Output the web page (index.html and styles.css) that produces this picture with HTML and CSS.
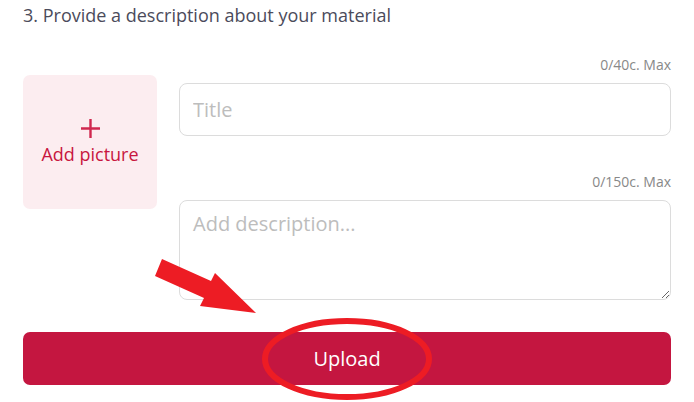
FILE: index.html
```html
<!DOCTYPE html>
<html lang="en">
<head>
    <meta charset="UTF-8">
    <meta name="viewport" content="width=device-width, initial-scale=1.0">
    <title>Upload Material</title>
    <link rel="stylesheet" href="styles.css">
</head>
<body>
    <main class="step">
        <h2 class="step-title">3. Provide a description about your material</h2>

        <div class="material-row">
            <button class="picture-box" type="button">
                <svg class="picture-plus" width="19" height="19" viewBox="0 0 19 19">
                    <path d="M9.5 0V19M0 9.5H19" stroke="#d0284f" stroke-width="2.4" fill="none"/>
                </svg>
                <span class="picture-label">Add picture</span>
            </button>

            <div class="fields">
                <p class="counter">0/40c. Max</p>
                <input class="field field-title" type="text" placeholder="Title">
                <p class="counter counter-desc">0/150c. Max</p>
                <textarea class="field field-desc" placeholder="Add description..."></textarea>
            </div>
        </div>

        <button class="upload-btn" type="button">Upload</button>
    </main>

    <!-- annotation drawn over the page -->
    <svg class="annotation" width="694" height="402" viewBox="0 0 694 402">
        <polygon points="162,259 211,281 215,273 256,313 200,306 204,298 155,276" fill="#ed1c24"/>
        <ellipse cx="347" cy="359" rx="82" ry="38" fill="none" stroke="#ed1c24" stroke-width="6"/>
    </svg>
</body>
</html>
```

FILE: styles.css
```css
* {
    box-sizing: border-box;
    margin: 0;
    padding: 0;
}

body {
    font-family: 'Open Sans', 'Noto Sans', sans-serif;
    background-color: #fff;
    color: #4b4b5b;
    width: 694px;
    height: 402px;
    overflow: hidden;
    position: relative;
}

.step {
    padding: 3px 23px 0 23px;
}

.step-title {
    font-size: 18px;
    font-weight: 400;
    line-height: 24px;
    color: #4b4b5b;
}

.material-row {
    display: flex;
    gap: 22px;
    margin-top: 29px;
}

.picture-box {
    flex: 0 0 134px;
    height: 134px;
    margin-top: 19px;
    border: none;
    border-radius: 7px;
    background-color: #fcedf0;
    color: #c8163f;
    font-family: inherit;
    display: flex;
    flex-direction: column;
    align-items: center;
    justify-content: center;
    gap: 4px;
    cursor: pointer;
}

.picture-plus {
    display: block;
}

.picture-label {
    font-size: 18px;
    line-height: 24px;
}

.fields {
    flex: 1;
    display: flex;
    flex-direction: column;
}

.counter {
    font-size: 14px;
    line-height: 18px;
    color: #888;
    text-align: right;
    margin-bottom: 9px;
}

.counter-desc {
    margin-top: 37px;
}

.field {
    width: 100%;
    border: 1px solid #dcdcdc;
    border-radius: 8px;
    font-family: inherit;
    font-size: 20px;
    color: #333;
    padding: 0 13px;
    outline: none;
}

.field::placeholder {
    color: #bdbdbd;
}

.field-title {
    height: 53px;
}

.field-desc {
    height: 100px;
    padding-top: 9px;
    line-height: 28px;
    resize: vertical;
}

.upload-btn {
    display: block;
    width: 100%;
    height: 53px;
    margin-top: 32px;
    border: none;
    border-radius: 7px;
    background-color: #c41640;
    color: #fff;
    font-family: inherit;
    font-size: 20px;
    cursor: pointer;
}

.annotation {
    position: absolute;
    top: 0;
    left: 0;
    pointer-events: none;
}
```
